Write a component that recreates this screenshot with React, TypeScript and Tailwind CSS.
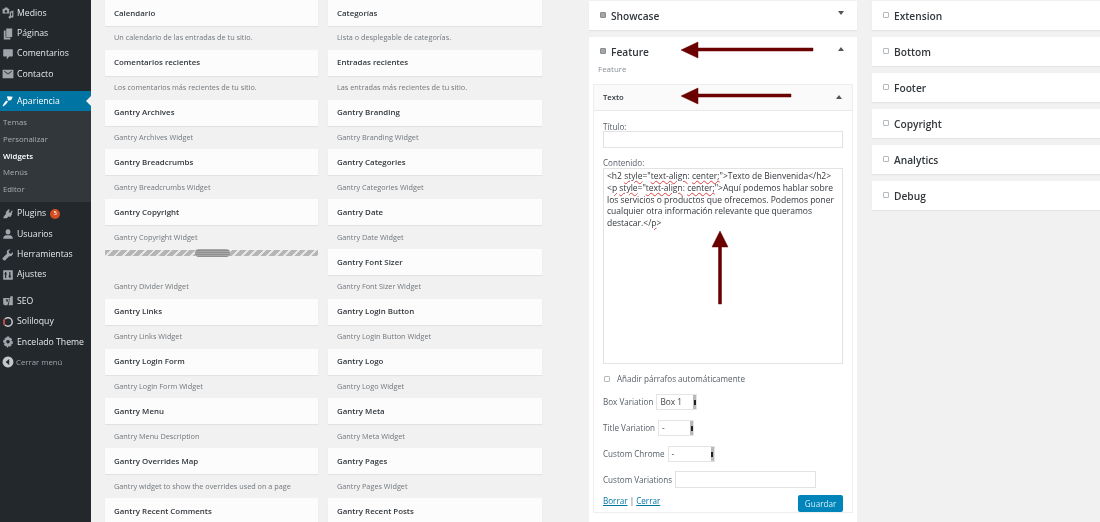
import type { ReactNode } from 'react'

const filas: [string, string, string, string][] = [
  ['Calendario', 'Un calendario de las entradas de tu sitio.', 'Categorías', 'Lista o desplegable de categorías.'],
  ['Comentarios recientes', 'Los comentarios más recientes de tu sitio.', 'Entradas recientes', 'Las entradas más recientes de tu sitio.'],
  ['Gantry Archives', 'Gantry Archives Widget', 'Gantry Branding', 'Gantry Branding Widget'],
  ['Gantry Breadcrumbs', 'Gantry Breadcrumbs Widget', 'Gantry Categories', 'Gantry Categories Widget'],
  ['Gantry Copyright', 'Gantry Copyright Widget', 'Gantry Date', 'Gantry Date Widget'],
  ['', 'Gantry Divider Widget', 'Gantry Font Sizer', 'Gantry Font Sizer Widget'],
  ['Gantry Links', 'Gantry Links Widget', 'Gantry Login Button', 'Gantry Login Button Widget'],
  ['Gantry Login Form', 'Gantry Login Form Widget', 'Gantry Logo', 'Gantry Logo Widget'],
  ['Gantry Menu', 'Gantry Menu Description', 'Gantry Meta', 'Gantry Meta Widget'],
  ['Gantry Overrides Map', 'Gantry widget to show the overrides used on a page', 'Gantry Pages', 'Gantry Pages Widget'],
  ['Gantry Recent Comments', '', 'Gantry Recent Posts', ''],
]

function Icono({ children }: { children: ReactNode }) {
  return (
    <svg viewBox="0 0 20 20" className="h-[12px] w-[12px] shrink-0 fill-current">
      {children}
    </svg>
  )
}

const iconos: Record<string, ReactNode> = {
  medios: (
    <Icono>
      <path d="M1 3h3l1-2h4l1 2h2v8H1zM6.500 5a2.200 2.200 0 1 0 .01 0zM13 8l6-2v10a2 2 0 1 1-2-2V9l-2 .7V17a2 2 0 1 1-2-2z" fillRule="evenodd" />
    </Icono>
  ),
  paginas: (
    <Icono>
      <path d="M7 1h10v14H7zM3 4h3v12h8v3H3z" />
    </Icono>
  ),
  comentarios: (
    <Icono>
      <path d="M3 2h14a1 1 0 0 1 1 1v10a1 1 0 0 1-1 1h-5l-4 5v-5H3a1 1 0 0 1-1-1V3a1 1 0 0 1 1-1z" />
    </Icono>
  ),
  contacto: (
    <Icono>
      <path d="M1 3h18v14H1zM3.500 6 10 11l6.500-5-1-1L10 9 4.500 5z" fillRule="evenodd" />
    </Icono>
  ),
  apariencia: (
    <Icono>
      <path d="M9 2l9 1-3 6-2-1-1 2-3-2 1-2-2-1zM7 9l3 2-3 4-5 4-1-1 3-5z" />
    </Icono>
  ),
  plugins: (
    <Icono>
      <path d="M11 2l2 1-2 4 3 1 2-4 2 1-2 4 1 1-3 5-3-1-3 3H2l1-3 4-5-1-1 2-3z" />
    </Icono>
  ),
  usuarios: (
    <Icono>
      <path d="M10 2a4 4 0 0 1 4 4v1a4 4 0 0 1-8 0V6a4 4 0 0 1 4-4zM7 12h6c3 0 5 2 5 6H2c0-4 2-6 5-6z" />
    </Icono>
  ),
  herramientas: (
    <Icono>
      <path d="M18 5l-3 3-3-1-1-3 3-3c-3-1-6 1-6 4 0 1 0 2 .5 2.500L1 15c-1 2 2 5 4 4l7-7c3 1 7-2 6-7z" />
    </Icono>
  ),
  ajustes: (
    <Icono>
      <path d="M2 2h16v16H2zM5 5v2H4v2h1v6h2V9h1V7H7V5zM12 5v6h-1v2h1v2h2v-2h1v-2h-1V5z" fillRule="evenodd" />
    </Icono>
  ),
  seo: (
    <Icono>
      <path d="M2 5h11l-1 3-3 9H5a3 3 0 0 1-3-3zM14 2h4v15h-7z" />
      <path d="M7 7l1.500 4L10 7" className="fill-none stroke-[#23282d] stroke-[1.500]" />
    </Icono>
  ),
  soliloquy: (
    <svg viewBox="0 0 20 20" className="h-[12px] w-[12px] shrink-0 fill-none stroke-[2.500]">
      <circle cx="10" cy="10" r="7" className="stroke-[#c9ccd0]" />
      <path d="M5 15A7 7 0 0 1 5 5" className="stroke-[#c0392b]" />
    </svg>
  ),
  tema: (
    <Icono>
      <path d="M8 1h4l.5 2.500 2-.5 2.500 3-1.500 2 2.500 1v4l-2.500.5.500 2-3 2.500-2-1.500-1 2.500H8l-.5-2.500-2 .5L3 14l1.500-2L2 11V7l2.500-.5-.5-2L7 2l1 1zM10 6.500a3 3 0 1 0 .01 0z" fillRule="evenodd" />
    </Icono>
  ),
  cerrar: (
    <Icono>
      <path d="M10 1a9 9 0 1 1-.01 0zM12 5 6 10l6 5z" fillRule="evenodd" />
    </Icono>
  ),
}

function ItemMenu({ icono, texto, children }: { icono: string; texto: string; children?: ReactNode }) {
  return (
    <div className="flex h-[20.400px] items-center gap-[3px] pl-[1px] text-[8.700px] whitespace-nowrap text-[#e6e8ea]">
      <span className="flex w-[13px] justify-center text-[#a0a5aa]">{iconos[icono]}</span>
      <span>{texto}</span>
      {children}
    </div>
  )
}

function Sidebar() {
  return (
    <aside className="h-full w-[91px] shrink-0 bg-[#23282d] pt-[3px]">
      <ItemMenu icono="medios" texto="Medios" />
      <ItemMenu icono="paginas" texto="Páginas" />
      <ItemMenu icono="comentarios" texto="Comentarios" />
      <ItemMenu icono="contacto" texto="Contacto" />
      <div className="relative mt-[6px] flex h-[20px] items-center gap-[3px] bg-[#0074a2] pl-[1px] pt-[1px] text-[8.700px] text-white">
        <span className="flex w-[13px] justify-center">{iconos.apariencia}</span>
        <span>Apariencia</span>
        <span className="absolute right-0 top-[5px] h-0 w-0 border-y-[5px] border-r-[5px] border-y-transparent border-r-[#f1f1f1]" />
      </div>
      <div className="flex h-[91px] flex-col justify-center bg-[#32373c] px-[3px] text-[7.800px] leading-[16.700px] text-[#a9adb1]">
        <span>Temas</span>
        <span>Personalizar</span>
        <span className="font-semibold text-white">Widgets</span>
        <span>Menús</span>
        <span>Editor</span>
      </div>
      <div className="mt-[2px]">
        <ItemMenu icono="plugins" texto="Plugins">
          <span className="ml-[1px] flex h-[10px] w-[10px] items-center justify-center rounded-full bg-[#d54e21] text-[6px] font-semibold text-white">5</span>
        </ItemMenu>
        <ItemMenu icono="usuarios" texto="Usuarios" />
        <ItemMenu icono="herramientas" texto="Herramientas" />
        <ItemMenu icono="ajustes" texto="Ajustes" />
      </div>
      <div className="mt-[6px]">
        <ItemMenu icono="seo" texto="SEO" />
        <ItemMenu icono="soliloquy" texto="Soliloquy" />
        <ItemMenu icono="tema" texto="Encelado Theme" />
      </div>
      <div className="flex h-[20.400px] items-center gap-[2px] pl-[1px] text-[7.800px] text-[#a0a5aa]">
        <span className="flex w-[13px] justify-center text-[#c5c8cb]">{iconos.cerrar}</span>
        <span>Cerrar menú</span>
      </div>
    </aside>
  )
}

function Widget({ titulo, desc }: { titulo: string; desc: string }) {
  return (
    <div className="h-[49.800px]">
      {titulo ? (
        <div className="flex h-[26px] items-center bg-[#fcfcfc] px-[9px] pt-[1px] text-[7.900px] font-semibold text-[#32373c] shadow-[0_1px_1px_rgba(0,0,0,0.06)]">
          {titulo}
        </div>
      ) : (
        <div className="h-[26px] pt-[1px]">
          <div className="relative h-[6px] w-full bg-[repeating-linear-gradient(135deg,#b5b5b5_0,#b5b5b5_4px,#e6e6e6_4px,#e6e6e6_6px)]">
            <div className="absolute left-[90px] top-[-1px] h-[8px] w-[35px] rounded-full bg-[repeating-linear-gradient(0deg,#8f8f8f_0,#8f8f8f_1px,#a8a8a8_1px,#a8a8a8_2px)]" />
          </div>
        </div>
      )}
      <div className="flex h-[23.800px] items-center whitespace-nowrap px-[9px] text-[7.300px] text-[#72777c]">{desc}</div>
    </div>
  )
}

function Lista() {
  return (
    <div className="ml-[14px] flex gap-[10px]">
      <div className="w-[213px]">
        {filas.map((f) => (
          <Widget key={f[1] + f[0]} titulo={f[0]} desc={f[1]} />
        ))}
      </div>
      <div className="w-[214px]">
        {filas.map((f) => (
          <Widget key={f[2]} titulo={f[2]} desc={f[3]} />
        ))}
      </div>
    </div>
  )
}

function Caja({ lleno }: { lleno?: boolean }) {
  return (
    <span className={lleno ? 'h-[6px] w-[6px] shrink-0 rounded-[1px] border border-[#8a8d90] bg-[#a4a7aa]' : 'h-[6px] w-[6px] shrink-0 rounded-[1px] border border-[#b4b9be] bg-white'} />
  )
}

function Flecha({ arriba }: { arriba?: boolean }) {
  return (
    <span className={arriba ? 'mb-[8px] h-0 w-0 border-x-[3px] border-b-[4px] border-x-transparent border-b-[#555]' : 'mb-[8px] h-0 w-0 border-x-[3px] border-t-[4px] border-x-transparent border-t-[#555]'} />
  )
}

function Sidebarra({ nombre }: { nombre: string }) {
  return (
    <div className="flex h-[29px] items-center gap-[5px] bg-white pl-[11px] pt-[3px] text-[10.200px] font-semibold text-[#32373c] shadow-[0_1px_1px_rgba(0,0,0,0.05)]">
      <span className="mb-[5px] flex"><Caja /></span>
      {nombre}
    </div>
  )
}

function Sel({ ancho, texto }: { ancho: string; texto: string }) {
  return (
    <div className={`flex h-[16px] items-center justify-between border border-[#e4e4e4] bg-white pl-[3px] text-[#444] ${ancho}`}>
      <span className="text-[8.300px]">{texto}</span>
      <span className="flex h-full w-[3px] items-center justify-center bg-[#b8b8b8]">
        <span className="h-[5px] w-[2px] bg-[#222]" />
      </span>
    </div>
  )
}

function Palabra({ children }: { children: ReactNode }) {
  return <span className="underline decoration-[#e04040] decoration-wavy decoration-[0.500px] underline-offset-[1px]">{children}</span>
}

function Formulario() {
  return (
    <div className="mt-[2px] flex flex-col px-[9px] pr-[9px] text-[8.100px] text-[#555d66]">
      <label className="mt-[11px] leading-[6px]">Título:</label>
      <div className="mt-[1px] h-[17px] border border-[#e2e2e2] bg-white" />
      <label className="mt-[9px] leading-[12px]">Contenido:</label>
      <div className="mt-[-1px] h-[196px] border border-[#e2e2e2] bg-white px-[3px] py-[1px] text-[8.500px] leading-[11.800px] text-[#32373c]">
        &lt;h2 <Palabra>style</Palabra>="<Palabra>text-align</Palabra>: <Palabra>center;</Palabra>"&gt;Texto de Bienvenida&lt;/h2&gt;
        <br />
        &lt;<Palabra>p</Palabra> <Palabra>style</Palabra>="<Palabra>text-align</Palabra>: <Palabra>center;</Palabra>"&gt;Aquí podemos hablar sobre los servicios o productos que ofrecemos. Podemos poner cualquier otra información relevante que queramos destacar.&lt;/<Palabra>p</Palabra>&gt;
      </div>
      <div className="mt-[9px] flex items-center gap-[7px] pl-[1px]">
        <Caja />
        <span>Añadir párrafos automáticamente</span>
      </div>
      <div className="mt-[9px] flex items-center gap-[3px]">
        <span>Box Variation</span>
        <Sel ancho="w-[41px]" texto="Box 1" />
      </div>
      <div className="mt-[10px] flex items-center gap-[3px]">
        <span>Title Variation</span>
        <Sel ancho="w-[36px]" texto="-" />
      </div>
      <div className="mt-[10px] flex items-center gap-[3px]">
        <span>Custom Chrome</span>
        <Sel ancho="w-[47px]" texto="-" />
      </div>
      <div className="mt-[9px] flex items-center gap-[3px]">
        <span>Custom Variations</span>
        <div className="h-[17px] w-[141px] border border-[#e2e2e2] bg-white" />
      </div>
      <div className="mt-[7px] flex items-start justify-between">
        <span className="mt-0">
          <a className="text-[#0074a2] underline">Borrar</a> | <a className="text-[#0074a2] underline">Cerrar</a>
        </span>
        <button className="h-[17px] w-[45px] rounded-[2px] bg-[#0085ba] text-[8.100px] text-[#d5ecf5]">Guardar</button>
      </div>
    </div>
  )
}

function Columnas() {
  return (
    <div className="ml-[47px] w-[268px] pt-[1px]">
      <div className="flex h-[29px] items-center gap-[5px] bg-white pl-[11px] pr-[13px] pt-[3px] text-[10.200px] font-semibold text-[#32373c] shadow-[0_1px_1px_rgba(0,0,0,0.05)]">
        <span className="mb-[5px] flex"><Caja lleno /></span>
        <span className="flex-1">Showcase</span>
        <Flecha />
      </div>
      <div className="mt-[7px] bg-white px-[4px] pb-[10px]">
        <div className="flex h-[29px] items-center gap-[5px] pl-[7px] pr-[9px] pt-[3px] text-[10.200px] font-semibold text-[#32373c]">
          <span className="mb-[5px] flex"><Caja lleno /></span>
          <span className="flex-1">Feature</span>
          <Flecha arriba />
        </div>
        <div className="h-[18px] pl-[5px] text-[8px] leading-[6px] text-[#8a8f94]">Feature</div>
        <div className="border border-[#eeeeee]">
          <div className="flex h-[26px] items-center justify-between border-b border-[#e8e8e8] bg-[#fafafa] pl-[9px] pr-[10px] text-[7.700px] font-semibold text-[#32373c]">
            Texto
            <span className="flex pt-[6px]"><Flecha arriba /></span>
          </div>
          <Formulario />
        </div>
      </div>
    </div>
  )
}

function Flechas() {
  return (
    <svg width="1100" height="522" className="pointer-events-none absolute left-0 top-0 fill-[#6b0000] stroke-[#6b0000]">
      <path d="M681 50l17-8v6h115v3H698v7z" strokeWidth="0.500" />
      <path d="M681 96l17-8v6h93v3H698v7z" strokeWidth="0.500" />
      <path d="M720 231l8 16h-6.500v57h-3v-57H712z" strokeWidth="0.500" />
    </svg>
  )
}

export default function App() {
  return (
    <div className="relative flex h-[522px] w-[1100px] overflow-hidden bg-[#f1f1f1] font-['Open_Sans',sans-serif] blur-[0.400px]">
      <Sidebar />
      <Lista />
      <Columnas />
      <div className="ml-[15px] flex w-[228px] flex-col gap-[7px] pt-[1px]">
        {['Extension', 'Bottom', 'Footer', 'Copyright', 'Analytics', 'Debug'].map((n) => (
          <Sidebarra key={n} nombre={n} />
        ))}
      </div>
      <Flechas />
    </div>
  )
}
